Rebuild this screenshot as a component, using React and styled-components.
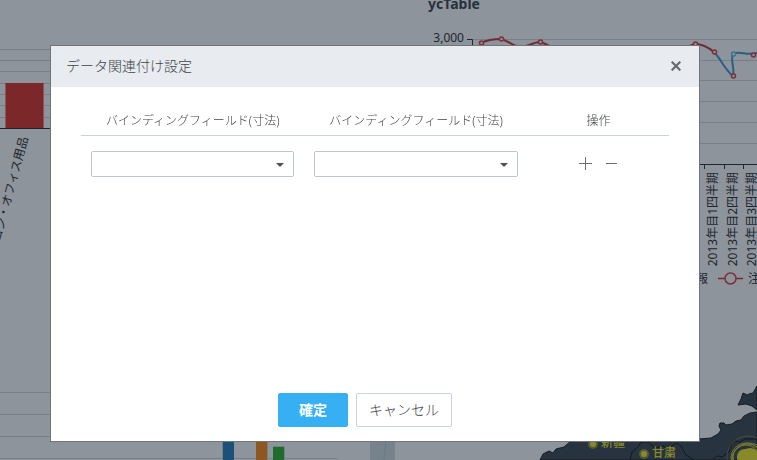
import React, { useState } from "react"
import styled, { createGlobalStyle } from "styled-components"

const font = `"Noto Sans", "Noto Sans CJK JP", sans-serif`

const columns = ["バインディングフィールド(寸法)", "バインディングフィールド(寸法)"]

const quarters = [
  { x: 717, label: "2013年目1四半期" },
  { x: 737, label: "2013年目2四半期" },
  { x: 756, label: "2013年目3四半期" },
]

const redPoints = [
  [481, 43],
  [501, 39],
  [540, 42],
  [598, 48],
  [695, 44],
  [714, 52],
  [733, 76],
  [753, 55],
]

const CategoryChart = () => (
  <Chart viewBox="0 0 396 360" width="396" height="360">
    {[49, 60, 71, 83, 94, 105, 117].map(y => (
      <Grid key={y} d={`M0 ${y}.5H340`} />
    ))}
    <rect x="5" y="83" width="39" height="45" fill="#7c282b" />
    <path d="M5.5 128V83.5M43.5 128V83.5" stroke="#8b5558" />
    <Axis d="M0 128.5H340" />
    <AxisText textAnchor="end" transform="translate(28 138) rotate(-75)">
      パソコン・オフィス用品
    </AxisText>
  </Chart>
)

const LineChart = () => (
  <Chart viewBox="396 0 361 360" width="361" height="360">
    <ChartTitle x="428" y="9">
      ycTable
    </ChartTitle>
    <AxisText x="464" y="42" textAnchor="end">
      3,000
    </AxisText>
    {[39, 60, 80, 101, 122, 143].map(y => (
      <Grid key={y} d={`M473 ${y}.5H757`} />
    ))}
    <Axis d="M467 39.5H472.5V164.5H757M704.5 164V169M724.5 164V169M743.5 164V169" />
    <Line
      color="#2c5f84"
      d="M714 52C721 59 725 70 733 76C735 70 730 58 733 54C738 50 747 56 757 53"
    />
    <Line
      color="#702b36"
      d="M481 43C487 40 494 39 501 39C509 41 514 47 521 47C528 47 533 42 540 42C550 45 557 52 570 52C580 52 588 48 598 48C630 57 670 55 695 44C703 44 708 47 714 52"
    />
    <Marker cx="733.5" cy="54" r="2" color="#3d7391" />
    {redPoints.map(([x, y]) => (
      <Marker key={x} cx={x + 0.5} cy={y} r="2" color="#7c3038" />
    ))}
    {quarters.map(({ x, label }) => (
      <AxisText
        key={x}
        textAnchor="end"
        transform={`translate(${x} 172) rotate(-90)`}
      >
        {label}
      </AxisText>
    ))}
    <AxisText x="708" y="283" textAnchor="end">
      情報
    </AxisText>
    <path d="M718 278.5H743" stroke="#7c282b" strokeWidth="1.5" />
    <Marker cx="730.5" cy="278.5" r="5.5" color="#7c3038" />
    <AxisText x="748" y="283">
      注文
    </AxisText>
  </Chart>
)

const StackChart = () => (
  <Chart viewBox="0 360 396 100" width="396" height="100">
    {[392, 414, 436, 458].map(y => (
      <Grid key={y} d={`M0 ${y}.5H337`} />
    ))}
    <rect x="222" y="420" width="12" height="40" fill="#1b5179" />
    <rect x="256" y="420" width="12" height="40" fill="#8f5720" />
    <rect x="273" y="447" width="11" height="13" fill="#226b2e" />
    <path
      d="M222.5 420V460M267.5 420V460M273 446.5H284.5V460"
      fill="none"
      stroke="#6f8582"
    />
    <path d="M370 360H395V460H370Z" fill="#76838d" />
    <path d="M385.5 425V445L384 460" fill="none" stroke="#6b7983" />
  </Chart>
)

const MapChart = () => (
  <Chart viewBox="396 360 361 100" width="361" height="100">
    <Land d="M540 460L543 454L549 451L553 453L556 449L564 447L571 441L582 437H690L699 439L711 438L718 434L721 430L719 426L720 423L724 423L726 425L732 424L736 421L741 420L744 416L750 413L757 412V460Z" />
    <Land d="M738 405L741 399L743 393L747 395L749 394L753 393L757 386V410L752 406L746 404Z" />
    <path
      d="M630 460L632 452L638 447L641 442L648 442L655 448L663 446L668 449L676 443L681 446L686 455L694 460M712 460L717 456L722 457L729 452L731 445L735 441L740 442L745 439L757 439"
      fill="none"
      stroke="#111922"
    />
    {[
      [593, 444],
      [644, 454],
    ].map(([x, y]) => (
      <g key={x} fill="#89892b">
        <circle cx={x} cy={y} r="5" opacity="0.45" />
        <circle cx={x} cy={y} r="3" />
      </g>
    ))}
    <MapLabel x="601" y="447">
      新疆
    </MapLabel>
    <MapLabel x="652" y="457">
      甘粛
    </MapLabel>
    <g fill="none" stroke="#77782c">
      <ellipse cx="746" cy="457" rx="13" ry="12" />
      <ellipse cx="748" cy="459" rx="16" ry="15" />
      <circle cx="746" cy="458" r="15" />
      <circle cx="749" cy="460" r="17" />
      <circle cx="748" cy="457" r="21" opacity="0.4" />
    </g>
    <circle cx="745" cy="457" r="8" fill="#89892b" />
    <circle cx="750" cy="458" r="10" fill="#89892b" />
  </Chart>
)

const App = () => {
  const [rows, setRows] = useState([0])

  const addRow = () => setRows([...rows, rows[rows.length - 1] + 1])
  const removeRow = id =>
    rows.length > 1 && setRows(rows.filter(row => row !== id))

  return (
    <>
      <GlobalStyle />
      <Dashboard>
        <CategoryChart />
        <LineChart />
        <StackChart />
        <MapChart />
      </Dashboard>
      <Overlay>
        <Dialog role="dialog" aria-labelledby="dialog-title">
          <Header>
            <Title id="dialog-title">データ関連付け設定</Title>
            <IconButton aria-label="閉じる">
              <svg width="10" height="10" viewBox="0 0 10 10">
                <path
                  d="M0.7 0.7L9.3 9.3M9.3 0.7L0.7 9.3"
                  stroke="#666b6e"
                  strokeWidth="2.2"
                />
              </svg>
            </IconButton>
          </Header>
          <Body>
            <Table>
              <thead>
                <tr>
                  {columns.map((name, i) => (
                    <HeadCell key={i} id={`field-${i}`}>
                      {name}
                    </HeadCell>
                  ))}
                  <HeadCell $narrow>操作</HeadCell>
                </tr>
              </thead>
              <tbody>
                {rows.map(row => (
                  <tr key={row}>
                    {columns.map((name, i) => (
                      <Cell key={i}>
                        <SelectBox>
                          <Select aria-labelledby={`field-${i}`}>
                            <option value=""></option>
                          </Select>
                          <Arrow width="8" height="4" viewBox="0 0 8 4">
                            <path d="M0 0H8L4 4Z" fill="#4d5154" />
                          </Arrow>
                        </SelectBox>
                      </Cell>
                    ))}
                    <Cell>
                      <Actions>
                        <IconButton aria-label="追加" onClick={addRow}>
                          <svg width="13" height="13" viewBox="0 0 13 13">
                            <path d="M0 6.5H13M6.5 0V13" stroke="#6c6f72" />
                          </svg>
                        </IconButton>
                        <IconButton
                          aria-label="削除"
                          onClick={() => removeRow(row)}
                        >
                          <svg width="11" height="13" viewBox="0 0 11 13">
                            <path d="M0 6.5H11" stroke="#6c6f72" />
                          </svg>
                        </IconButton>
                      </Actions>
                    </Cell>
                  </tr>
                ))}
              </tbody>
            </Table>
          </Body>
          <Footer>
            <Button $primary>確定</Button>
            <Button>キャンセル</Button>
          </Footer>
        </Dialog>
      </Overlay>
    </>
  )
}

const GlobalStyle = createGlobalStyle`
  * {
    box-sizing: border-box;
  }
  body {
    margin: 0;
    background: #8d949b;
    color: #404447;
    font-family: ${font};
    font-weight: 300;
    overflow: hidden;
  }
`
const Dashboard = styled.main`
  display: grid;
  grid-template-columns: 396px 1fr;
`
const Chart = styled.svg`
  display: block;
`
const Grid = styled.path`
  stroke: #797f87;
`
const Axis = styled.path`
  fill: none;
  stroke: #1f262e;
`
const Line = styled.path`
  fill: none;
  stroke: ${({ color }) => color};
  stroke-width: 2;
`
const Marker = styled.circle`
  fill: #8d949b;
  stroke: ${({ color }) => color};
  stroke-width: 1.5;
`
const Land = styled.path`
  fill: #27333f;
  stroke: #151d26;
`
const AxisText = styled.text`
  fill: #1f262e;
  font-size: 12px;
  font-weight: 400;
`
const ChartTitle = styled.text`
  fill: #27313c;
  font-size: 14px;
  font-weight: 700;
`
const MapLabel = styled.text`
  fill: #89892b;
  font-size: 12px;
  font-weight: 500;
`
const Overlay = styled.div`
  position: fixed;
  inset: 0;
  display: flex;
  padding: 46px 58px 19px 51px;
`
const Dialog = styled.section`
  flex: 1;
  display: flex;
  flex-direction: column;
  background: #fff;
  box-shadow: 0 0 0 1px #70757a;
`
const Header = styled.header`
  display: flex;
  align-items: center;
  justify-content: space-between;
  height: 41px;
  padding: 0 18px 1px 15px;
  background: #e8ebf0;
`
const Title = styled.h2`
  margin: 0;
  font-size: 14px;
  font-weight: inherit;
  line-height: 20px;
`
const IconButton = styled.button`
  display: flex;
  padding: 0;
  border: 0;
  background: none;
  cursor: pointer;
`
const Body = styled.div`
  flex: 1;
  padding: 19px 30px 0;
`
const Table = styled.table`
  width: 100%;
  table-layout: fixed;
  border-collapse: collapse;
`
const HeadCell = styled.th`
  width: ${({ $narrow }) => ($narrow ? "24%" : "38%")};
  height: 29px;
  padding: 2px 0 0;
  border-bottom: 1px solid #cad3dc;
  font-size: 12px;
  font-weight: inherit;
  line-height: 18px;
`
const Cell = styled.td`
  padding: 15px 10px 0;
`
const SelectBox = styled.div`
  position: relative;
`
const Select = styled.select`
  display: block;
  width: 100%;
  height: 26px;
  padding: 0 24px 0 8px;
  border: 1px solid #bac6d2;
  border-radius: 2px;
  background: #fff;
  color: inherit;
  font-family: inherit;
  font-size: 12px;
  appearance: none;
`
const Arrow = styled.svg`
  position: absolute;
  top: 12px;
  right: 10px;
  pointer-events: none;
`
const Actions = styled.div`
  display: flex;
  justify-content: center;
  gap: 14px;
`
const Footer = styled.footer`
  display: flex;
  justify-content: center;
  gap: 8px;
  padding: 0 20px 14px 0;
`
const Button = styled.button`
  height: 34px;
  padding: 0 ${({ $primary }) => ($primary ? "20px" : "12px")} 2px;
  border: 1px solid ${({ $primary }) => ($primary ? "#36b0f3" : "#cad3dc")};
  border-radius: 2px;
  background: ${({ $primary }) => ($primary ? "#36b0f3" : "#fff")};
  color: ${({ $primary }) => ($primary ? "#fff" : "#404447")};
  font-family: inherit;
  font-size: 14px;
  font-weight: ${({ $primary }) => ($primary ? 700 : 300)};
  cursor: pointer;
`

export default App
